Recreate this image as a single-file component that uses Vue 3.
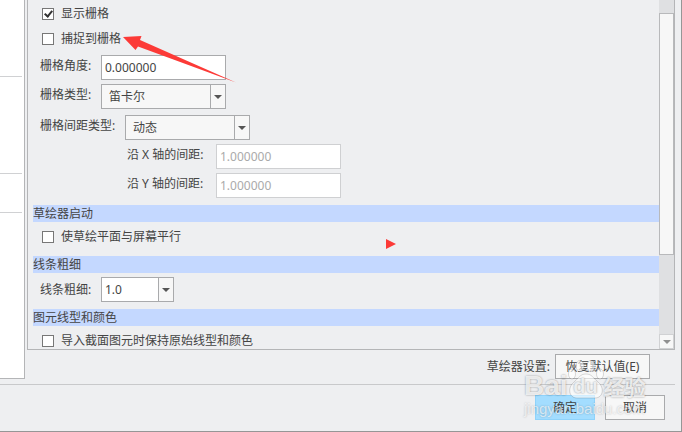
<script setup>
import { reactive } from "vue";

const settings = reactive({
  showGrid: true,
  snapToGrid: false,
  angle: "0.000000",
  gridType: "笛卡尔",
  spacingType: "动态",
  spacingX: "1.000000",
  spacingY: "1.000000",
  parallelToScreen: false,
  lineWidth: "1.0",
  keepOriginal: false,
});
</script>

<template>
  <form class="dialog" @submit.prevent>
    <div class="main">
      <nav class="sidebar">
        <hr class="rule rule-first" />
        <hr class="rule rule-second" />
        <hr class="rule rule-third" />
      </nav>

      <section class="content">
        <div class="panel">
          <div class="options">
            <label class="check">
              <input v-model="settings.showGrid" type="checkbox" />
              显示栅格
            </label>
            <label class="check">
              <input v-model="settings.snapToGrid" type="checkbox" />
              捕捉到栅格
            </label>

            <div class="fields">
              <div class="field">
                <label for="angle">栅格角度:</label>
                <input id="angle" v-model="settings.angle" class="text" type="text" />
              </div>
              <div class="field">
                <label for="grid-type">栅格类型:</label>
                <span class="combo">
                  <select id="grid-type" v-model="settings.gridType">
                    <option>笛卡尔</option>
                    <option>极坐标</option>
                  </select>
                  <i class="arrow" />
                </span>
              </div>
              <div class="field field-spacing">
                <label for="spacing-type">栅格间距类型:</label>
                <span class="combo">
                  <select id="spacing-type" v-model="settings.spacingType">
                    <option>动态</option>
                    <option>静态</option>
                  </select>
                  <i class="arrow" />
                </span>
              </div>
              <div class="field field-nested">
                <label for="spacing-x">沿 X 轴的间距:</label>
                <input id="spacing-x" v-model="settings.spacingX" class="text" type="text" disabled />
              </div>
              <div class="field field-nested">
                <label for="spacing-y">沿 Y 轴的间距:</label>
                <input id="spacing-y" v-model="settings.spacingY" class="text" type="text" disabled />
              </div>
            </div>

            <h2>草绘器启动</h2>
            <label class="check">
              <input v-model="settings.parallelToScreen" type="checkbox" />
              使草绘平面与屏幕平行
            </label>

            <h2>线条粗细</h2>
            <div class="field field-line">
              <label for="line-width">线条粗细:</label>
              <span class="combo combo-small">
                <select id="line-width" v-model="settings.lineWidth">
                  <option>1.0</option>
                  <option>2.0</option>
                </select>
                <i class="arrow" />
              </span>
            </div>

            <h2>图元线型和颜色</h2>
            <label class="check check-last">
              <input v-model="settings.keepOriginal" type="checkbox" />
              导入截面图元时保持原始线型和颜色
            </label>
          </div>

          <div class="scrollbar">
            <div class="thumb"></div>
            <button class="scroll-down" type="button" aria-label="向下滚动">
              <i class="triangle" />
            </button>
          </div>
        </div>

        <div class="restore">
          <label for="restore">草绘器设置:</label>
          <button id="restore" class="btn btn-wide" type="button">恢复默认值(E)</button>
        </div>
      </section>
    </div>

    <footer class="actions">
      <button class="btn btn-primary" type="submit">确定</button>
      <button class="btn" type="button">取消</button>
    </footer>

    <svg class="pointer" width="116" height="52" viewBox="0 0 116 52" aria-hidden="true">
      <path d="M2 6 L20.5 5 L19 9 L115 51.5 L17 15.5 L14.5 19 Z" fill="#fc3a37" />
    </svg>
    <svg class="marker" width="10" height="10" viewBox="0 0 10 10" aria-hidden="true">
      <path d="M0 0 L10 5 L0 10 Z" fill="#fc3a37" />
    </svg>

    <div class="watermark">
      <div class="brand">
        <span>Bai</span>
        <span class="paw">
          <svg width="36" height="40" viewBox="0 0 36 40" aria-hidden="true">
            <ellipse cx="4" cy="15" rx="3.5" ry="5" />
            <ellipse cx="12" cy="7" rx="4" ry="5.5" />
            <ellipse cx="23" cy="7" rx="4" ry="5.5" />
            <ellipse cx="32" cy="15" rx="3.5" ry="5" />
            <path d="M18 15 C12 15 11 19 6 23 C-1 29 1 39 9 39 H27 C35 39 37 29 30 23 C25 19 24 15 18 15 Z" />
          </svg>
          <span class="du">du</span>
        </span>
        <span class="cjk">经验</span>
      </div>
      <div class="url">jingyan.baidu.com</div>
    </div>
  </form>
</template>

<style>
body {
  margin: 0;
  background: #eeeff1;
}
</style>

<style scoped>
.dialog {
  position: relative;
  box-sizing: border-box;
  border-right: 1px solid #969696;
  border-bottom: 1px solid #969696;
  background: #eeeff1;
  color: #444;
  font: 12px/18px "Noto Sans", "Noto Sans CJK SC", sans-serif;
  overflow: hidden;
}

.main {
  display: flex;
  gap: 2px;
  margin-right: 6px;
  padding-bottom: 5px;
  border-bottom: 1px solid #c8c9cb;
}

.sidebar {
  width: 24px;
  flex-shrink: 0;
  background: #fff;
  border-right: 1px solid #b4b5b7;
  border-bottom: 1px solid #b4b5b7;
}

.rule {
  width: 22px;
  height: 1px;
  margin: 0;
  border: none;
  background: #d0d1d3;
}

.rule-first {
  margin-top: 76px;
}

.rule-second {
  margin-top: 96px;
}

.rule-third {
  margin-top: 38px;
}

.content {
  flex: 1;
  min-width: 0;
}

.panel {
  display: flex;
  border: 1px solid #b4b5b7;
  border-top: none;
}

.options {
  flex: 1;
  min-width: 0;
  padding: 1px 0 0 5px;
}

.check {
  display: flex;
  align-items: center;
  gap: 7px;
  height: 25px;
  padding-left: 9px;
}

/* the scroll area cuts into the last row */
.check-last {
  margin-bottom: -4px;
}

.check input {
  appearance: none;
  width: 12px;
  height: 12px;
  margin: 0;
  border: 1px solid #777;
  background: #fff;
}

.check input:checked::before {
  content: "";
  display: block;
  width: 3px;
  height: 6px;
  margin: 0 0 0 3px;
  border: solid #333;
  border-width: 0 2px 2px 0;
  transform: rotate(40deg);
}

.fields {
  display: flex;
  flex-direction: column;
  gap: 4px;
  padding-top: 4px;
}

.field {
  display: flex;
  padding-left: 7px;
}

.field > label {
  width: 61px;
  line-height: 22px;
  white-space: nowrap;
}

.field-spacing {
  margin-top: 2px;
}

.field-spacing > label {
  width: 85px;
}

.field-nested {
  padding-left: 94px;
}

.field-nested > label {
  width: 89px;
}

.field-line {
  align-items: center;
  padding-top: 2px;
}

.text,
.combo select {
  box-sizing: border-box;
  width: 125px;
  height: 25px;
  margin: 0;
  border: 1px solid #a9aaac;
  border-radius: 0;
  color: #444;
  font: inherit;
}

.text {
  padding: 0 3px;
  background: #fff;
}

.text:disabled {
  border-color: #cfd0d2;
  color: #aaa;
}

.combo {
  position: relative;
  display: flex;
}

.combo select {
  appearance: none;
  padding: 0 20px 0 7px;
  background: #f7f7f7;
}

.combo-small select {
  width: 73px;
  padding-left: 3px;
  background: #fff;
}

.arrow {
  position: absolute;
  top: 1px;
  right: 1px;
  bottom: 1px;
  width: 14px;
  border-left: 1px solid #a9aaac;
  background: #f7f7f7;
  pointer-events: none;
}

.arrow::before,
.triangle {
  display: block;
  width: 0;
  border: 4px solid transparent;
  border-top-color: #555;
  border-bottom: none;
}

.arrow::before {
  content: "";
  margin: 10px auto 0;
}

h2 {
  margin: 7px 0 2px;
  background: #c4d8ff;
  font: inherit;
  line-height: 17px;
}

.scrollbar {
  display: flex;
  flex-direction: column;
  justify-content: space-between;
  width: 15px;
  padding-top: 13px;
  box-sizing: border-box;
  background: #dfe0e2;
}

.thumb {
  height: 240px;
  border: 1px solid #b8b9bb;
  background: #f7f7f7;
}

.scroll-down {
  display: flex;
  align-items: center;
  justify-content: center;
  height: 15px;
  padding: 0;
  border: 1px solid #d0d1d3;
  background: #f7f7f7;
}

.triangle {
  border-top-color: #909090;
}

.restore {
  display: flex;
  align-items: center;
  justify-content: flex-end;
  gap: 5px;
  padding: 4px 25px 0 0;
}

.btn {
  box-sizing: border-box;
  width: 60px;
  height: 25px;
  padding: 0;
  border: 1px solid #a9aaac;
  background: #f7f7f7;
  color: #444;
  font: inherit;
}

.btn-wide {
  width: 95px;
}

.btn-primary {
  border-color: #8fd3fb;
  background: #a3ddff;
}

.actions {
  display: flex;
  justify-content: flex-end;
  gap: 10px;
  padding: 10px 16px 11px;
}

.pointer {
  position: absolute;
  top: 31px;
  left: 121px;
}

.marker {
  position: absolute;
  top: 239px;
  left: 386px;
}

.watermark {
  position: absolute;
  right: 29px;
  bottom: 12px;
  width: 128px;
  color: rgba(255, 255, 255, 0.8);
  white-space: nowrap;
  pointer-events: none;
}

.brand {
  display: flex;
  align-items: flex-end;
  font: bold 28px/26px "Liberation Sans", sans-serif;
  text-shadow: 0 0 2px rgba(0, 0, 0, 0.4);
}

.paw {
  position: relative;
  display: flex;
}

.paw svg {
  fill: rgba(255, 255, 255, 0.6);
  stroke: rgba(0, 0, 0, 0.14);
}

.du {
  position: absolute;
  right: 0;
  bottom: 0;
  left: 0;
  color: #eceef0;
  font-size: 20px;
  text-align: center;
}

.cjk {
  font: bold 21px/26px "Noto Sans CJK SC", sans-serif;
}

.url {
  color: rgba(255, 255, 255, 0.65);
  font: 15px/20px "Liberation Sans", sans-serif;
  text-shadow: 0 0 2px rgba(0, 0, 0, 0.25);
}
</style>
